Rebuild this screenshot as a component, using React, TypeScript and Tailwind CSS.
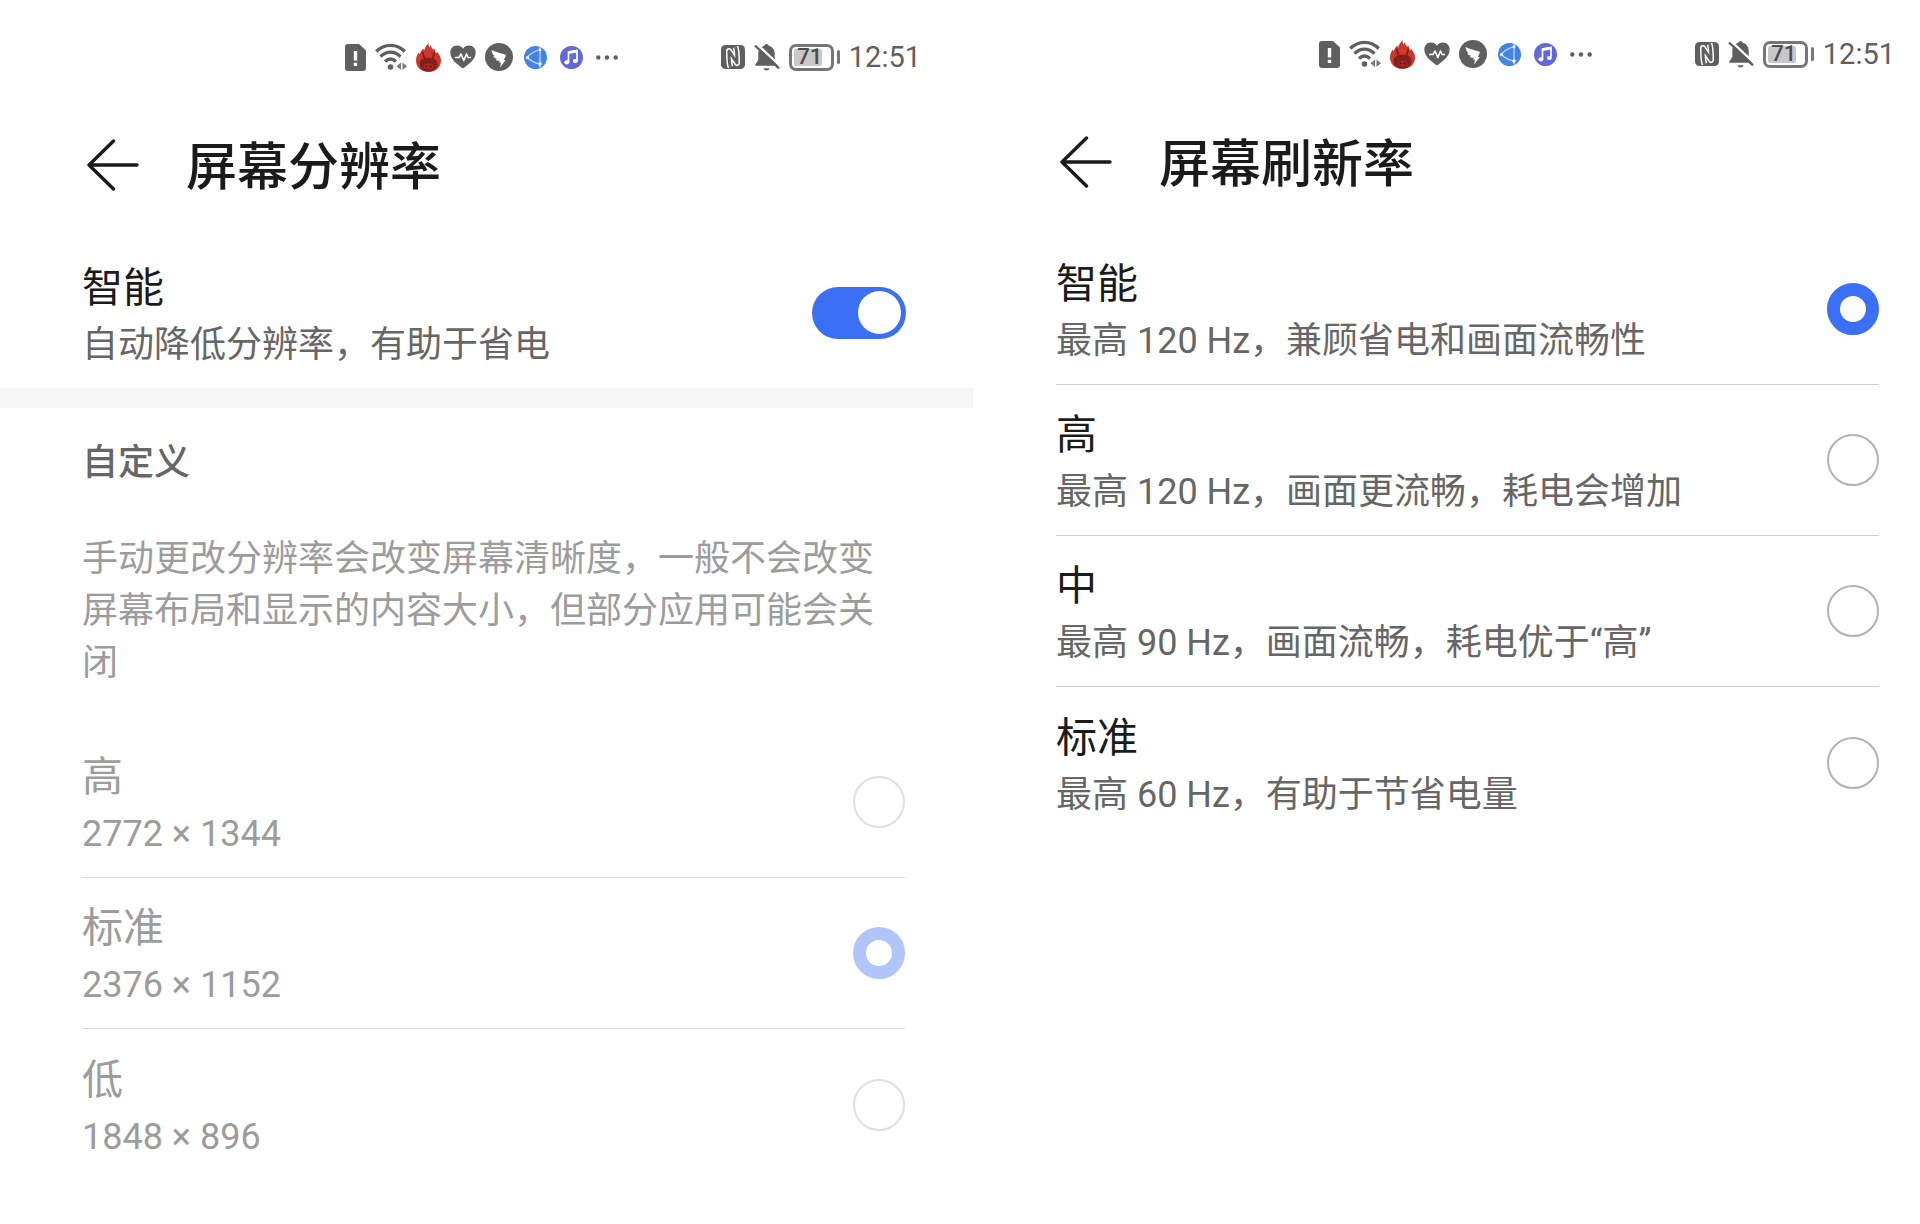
import { useState } from "react";

type Option = { id: string; title: string; detail: string };

const resolutions: Option[] = [
  { id: "high", title: "高", detail: "2772 × 1344" },
  { id: "standard", title: "标准", detail: "2376 × 1152" },
  { id: "low", title: "低", detail: "1848 × 896" },
];

const refreshRates: Option[] = [
  { id: "smart", title: "智能", detail: "最高 120 Hz，兼顾省电和画面流畅性" },
  { id: "high", title: "高", detail: "最高 120 Hz，画面更流畅，耗电会增加" },
  { id: "medium", title: "中", detail: "最高 90 Hz，画面流畅，耗电优于“高”" },
  { id: "standard", title: "标准", detail: "最高 60 Hz，有助于节省电量" },
];

function SimIcon() {
  return (
    <svg width="21" height="27" viewBox="0 0 21 27" fill="#5f5f5f">
      <path d="M3 0h11l7 6.500V24a3 3 0 0 1-3 3H3a3 3 0 0 1-3-3V3a3 3 0 0 1 3-3z" />
      <path d="M8.800 7h3.400v9.500H8.800zM8.800 18.700h3.400V22H8.800z" fill="#fff" />
    </svg>
  );
}

function WifiIcon() {
  return (
    <svg width="32" height="28" viewBox="0 0 32 28" fill="none" stroke="#5f5f5f" strokeWidth="3.300">
      <path d="M1.300 8.500c8-8.300 20.500-8.300 28.500 0" />
      <path d="M5.500 13.700c6-6 14-6 20 0" />
      <path d="M10 18.500c3.500-3.300 7.500-3.300 11 0" />
      <circle cx="15.500" cy="24" r="2.800" fill="#5f5f5f" stroke="none" />
      <path d="M26 19.500V27l-4.500-3.700zM27.500 19.500V27l4.500-3.700z" fill="#777" stroke="none" />
    </svg>
  );
}

function FlameIcon() {
  return (
    <svg width="25" height="29" viewBox="0 0 25 29">
      <path
        d="M12.500 29C5 29 0 24 0 17.500 0 14 1.200 11.500 3 9.500l.8 2C4.300 9 5.500 7 7.300 5.500L8 8c.5-3 2.500-5.500 4.500-8 0 2 .3 3 1 4.500L15 2c.3 2 1 3.500 2.200 5l.8-2c1 2 1.500 3.500 1.800 5.500L21.300 9c2 2.500 3.700 5 3.700 8.500C25 24 20 29 12.500 29z"
        fill="#cd372e"
      />
      <path d="M3.500 21c0-4 3.500-6.300 9-6.300s9 2.300 9 6.300-3.500 7.500-9 7.500-9-3.500-9-7.500z" fill="#861e1b" />
      <path d="m8.500 16-1.800-6.500M16.500 16l1.800-6.500" stroke="#861e1b" strokeWidth="1.800" strokeLinecap="round" />
      <ellipse cx="12.500" cy="23.500" rx="5" ry="3" fill="#a72a25" />
      <circle cx="10.500" cy="23.500" r="1" fill="#5c1210" />
      <circle cx="14.500" cy="23.500" r="1" fill="#5c1210" />
    </svg>
  );
}

function HeartIcon() {
  return (
    <svg width="26" height="24" viewBox="0 0 26 24">
      <path
        d="M13 23.500C7.500 19.500.3 14.500.3 7.500.3 3.300 3.300.5 7 .5c2.500 0 4.700 1.200 6 3.200C14.300 1.700 16.500.5 19 .5c3.700 0 6.700 2.800 6.700 7 0 7-7.200 12-12.700 16z"
        fill="#5f5f5f"
      />
      <path
        d="M5 12.500h4l2-3.500 2.800 6.500L16.500 9l1.500 3.500h3"
        fill="none"
        stroke="#fff"
        strokeWidth="1.600"
        strokeLinejoin="round"
      />
    </svg>
  );
}

function WingIcon() {
  return (
    <svg width="28" height="28" viewBox="0 0 28 28">
      <circle cx="14" cy="14" r="14" fill="#5f5f5f" />
      <path
        d="M6.500 7c4 2 9 3 13.500 4.500.8.300.9 1 .6 1.700L18.800 17h2L15 24.500l1-5h-2l.8-1.800c-1.800.3-3.300 0-4.300-1.200l2-.4c-2.300-.6-3.700-1.500-4.300-3.100l2 .3C8 12 6.700 10 6.500 7z"
        fill="#fff"
      />
    </svg>
  );
}

function GlobeIcon() {
  return (
    <svg width="23" height="23" viewBox="0 0 23 23">
      <circle cx="11.500" cy="11.500" r="11.500" fill="#4484e4" />
      <path d="M16 1v20.500M16 3.500C11 5 6 8 3 11.500c3.500 3.200 8 5.500 13 6.500" fill="none" stroke="#c3dbff" strokeWidth="1.200" />
      <circle cx="3.500" cy="11.500" r="1.500" fill="#fff" />
      <circle cx="16" cy="4" r="1.400" fill="#fff" />
      <circle cx="16" cy="18" r="1.700" fill="#fff" />
    </svg>
  );
}

function MusicIcon() {
  return (
    <svg width="23" height="23" viewBox="0 0 23 23">
      <circle cx="11.500" cy="11.500" r="11.500" fill="#6268d8" />
      <path d="M8.500 16V6l8.500-1.500v10" fill="none" stroke="#fff" strokeWidth="1.700" />
      <path d="M8.500 5.200 17 3.800v2.700L8.500 8z" fill="#fff" />
      <ellipse cx="6.800" cy="16.300" rx="2.500" ry="2.100" fill="#fff" />
      <ellipse cx="15.300" cy="15" rx="2.500" ry="2.100" fill="#fff" />
    </svg>
  );
}

function MoreIcon() {
  return (
    <svg width="22" height="5" viewBox="0 0 22 5" fill="#5f5f5f">
      <circle cx="2.300" cy="2.500" r="2.200" />
      <circle cx="11" cy="2.500" r="2.200" />
      <circle cx="19.700" cy="2.500" r="2.200" />
    </svg>
  );
}

function NfcIcon() {
  return (
    <svg width="24" height="24" viewBox="0 0 24 24">
      <rect width="24" height="24" rx="4.500" fill="#5f5f5f" />
      <g fill="none" strokeLinejoin="round">
        <path d="M9.500 22C8 19 8 15 8 6l8 12c0-9 0-13-1.500-16" stroke="#fff" strokeWidth="6" />
        <path d="M9.500 22C8 19 8 15 8 6l8 12c0-9 0-13-1.500-16" stroke="#5f5f5f" strokeWidth="3" />
      </g>
    </svg>
  );
}

function BellOffIcon() {
  return (
    <svg width="26" height="27" viewBox="0 0 26 27">
      <path
        d="M12.500 0c1.200 0 2 .7 2.200 1.800 3.800 1 6 4 6 8V16l3 4.500v1.200H1.300v-1.200l3-4.500V9.800c0-4 2.200-7 6-8C10.500.7 11.300 0 12.500 0z"
        fill="#5f5f5f"
      />
      <path d="M9.500 24.300h6c-.5 1.500-1.500 2.200-3 2.200s-2.500-.7-3-2.200z" fill="#5f5f5f" />
      <path d="M2.500-.3 26 22" stroke="#fff" strokeWidth="2.400" />
      <path d="M1 1.500 25 24.300" stroke="#5f5f5f" strokeWidth="2.400" />
    </svg>
  );
}

function Battery() {
  return (
    <div className="flex items-center gap-[3px]">
      <div className="h-[27px] w-[45px] rounded-[7px] border-3 border-[#767676] p-0.5">
        <div className="flex h-full w-7 items-center justify-center rounded-xs bg-[#c8c8c8] pl-1 text-[22px] leading-none font-medium text-[#4d4d4d]">
          71
        </div>
      </div>
      <div className="h-3.5 w-[3px] rounded-full bg-[#767676]" />
    </div>
  );
}

function StatusBar() {
  return (
    <div className="flex h-[52px] items-center justify-end gap-[103px]">
      <div className="flex items-center gap-[9px]">
        <SimIcon />
        <WifiIcon />
        <FlameIcon />
        <HeartIcon />
        <WingIcon />
        <div className="flex items-center gap-[13px] pl-0.5">
          <GlobeIcon />
          <MusicIcon />
          <MoreIcon />
        </div>
      </div>
      <div className="flex items-center gap-[9px]">
        <NfcIcon />
        <BellOffIcon />
        <Battery />
        <span className="text-[29px] leading-8 text-[#5f5f5f]">12:51</span>
      </div>
    </div>
  );
}

function Header({ title }: { title: string }) {
  return (
    <header className="mt-8 mb-[22px] flex h-[100px] items-center gap-[47px] pl-[87px]">
      <button type="button" aria-label="返回">
        <svg width="52" height="52" viewBox="0 0 52 52" fill="none" stroke="#1b1b1b" strokeWidth="3.400" strokeLinecap="round" strokeLinejoin="round">
          <path d="M26.500 2 2 26l24.500 24M2 26h48" />
        </svg>
      </button>
      <h1 className="pt-1 text-[51px] leading-none font-medium">{title}</h1>
    </header>
  );
}

type OptionListProps = {
  name: string;
  options: Option[];
  value: string;
  onChange: (id: string) => void;
  disabled?: boolean;
};

function OptionList({ name, options, value, onChange, disabled }: OptionListProps) {
  return (
    <fieldset disabled={disabled} className="group divide-y divide-[#cfcfcf] disabled:divide-[#dcdcdc]">
      {options.map((o) => (
        <label key={o.id} className="flex min-h-[151px] items-center justify-between">
          <span className="pt-1">
            <span className="block text-[41px] leading-[60px] group-disabled:text-[#9c9c9c]">{o.title}</span>
            <span className="block text-[36px] leading-[54px] text-[#666] group-disabled:text-[#9c9c9c]">{o.detail}</span>
          </span>
          <input
            type="radio"
            name={name}
            checked={value === o.id}
            onChange={() => onChange(o.id)}
            className="size-[52px] shrink-0 appearance-none rounded-full border-2 border-[#b2b2b2] checked:border-13 checked:border-[#3b6ff6] disabled:border-[#e0e0e0] disabled:checked:border-[#b1c5fb]"
          />
        </label>
      ))}
    </fieldset>
  );
}

export default function App() {
  const [auto, setAuto] = useState(true);
  const [resolution, setResolution] = useState("standard");
  const [rate, setRate] = useState("smart");

  return (
    <main className="grid min-h-screen grid-cols-[973fr_947fr] bg-white font-[Roboto,'Noto_Sans_CJK_SC',sans-serif] text-[#1b1b1b]" lang="zh-CN">
      <section className="pt-[31px]">
        <div className="pr-[52px]">
          <StatusBar />
        </div>
        <Header title="屏幕分辨率" />

        <label className="flex min-h-[151px] items-center justify-between pr-[67px] pl-[82px]">
          <span className="pt-1">
            <span className="block text-[41px] leading-[60px]">智能</span>
            <span className="block text-[36px] leading-[54px] text-[#666]">自动降低分辨率，有助于省电</span>
          </span>
          <input
            type="checkbox"
            role="switch"
            checked={auto}
            onChange={(e) => setAuto(e.target.checked)}
            className="flex h-[52px] w-[94px] shrink-0 appearance-none items-center rounded-full bg-[#d0d0d0] px-[5px] before:size-[43px] before:rounded-full before:bg-white checked:justify-end checked:bg-[#3b6ff6]"
          />
        </label>

        <div className="h-5 bg-[#f6f6f6]" />

        <div className="pr-[68px] pl-[82px]">
          <h2 className="pt-7 text-[36px] leading-[54px] font-medium text-[#666]">自定义</h2>
          <p className="pt-[43px] pb-[38px] text-[36px] leading-[52px] text-[#9c9c9c]">
            手动更改分辨率会改变屏幕清晰度，一般不会改变屏幕布局和显示的内容大小，但部分应用可能会关闭
          </p>
          <OptionList name="resolution" options={resolutions} value={resolution} onChange={setResolution} disabled={auto} />
        </div>
      </section>

      <section className="pt-[28px]">
        <div className="pr-[25px]">
          <StatusBar />
        </div>
        <Header title="屏幕刷新率" />
        <div className="pr-[41px] pl-[83px]">
          <OptionList name="rate" options={refreshRates} value={rate} onChange={setRate} />
        </div>
      </section>
    </main>
  );
}
